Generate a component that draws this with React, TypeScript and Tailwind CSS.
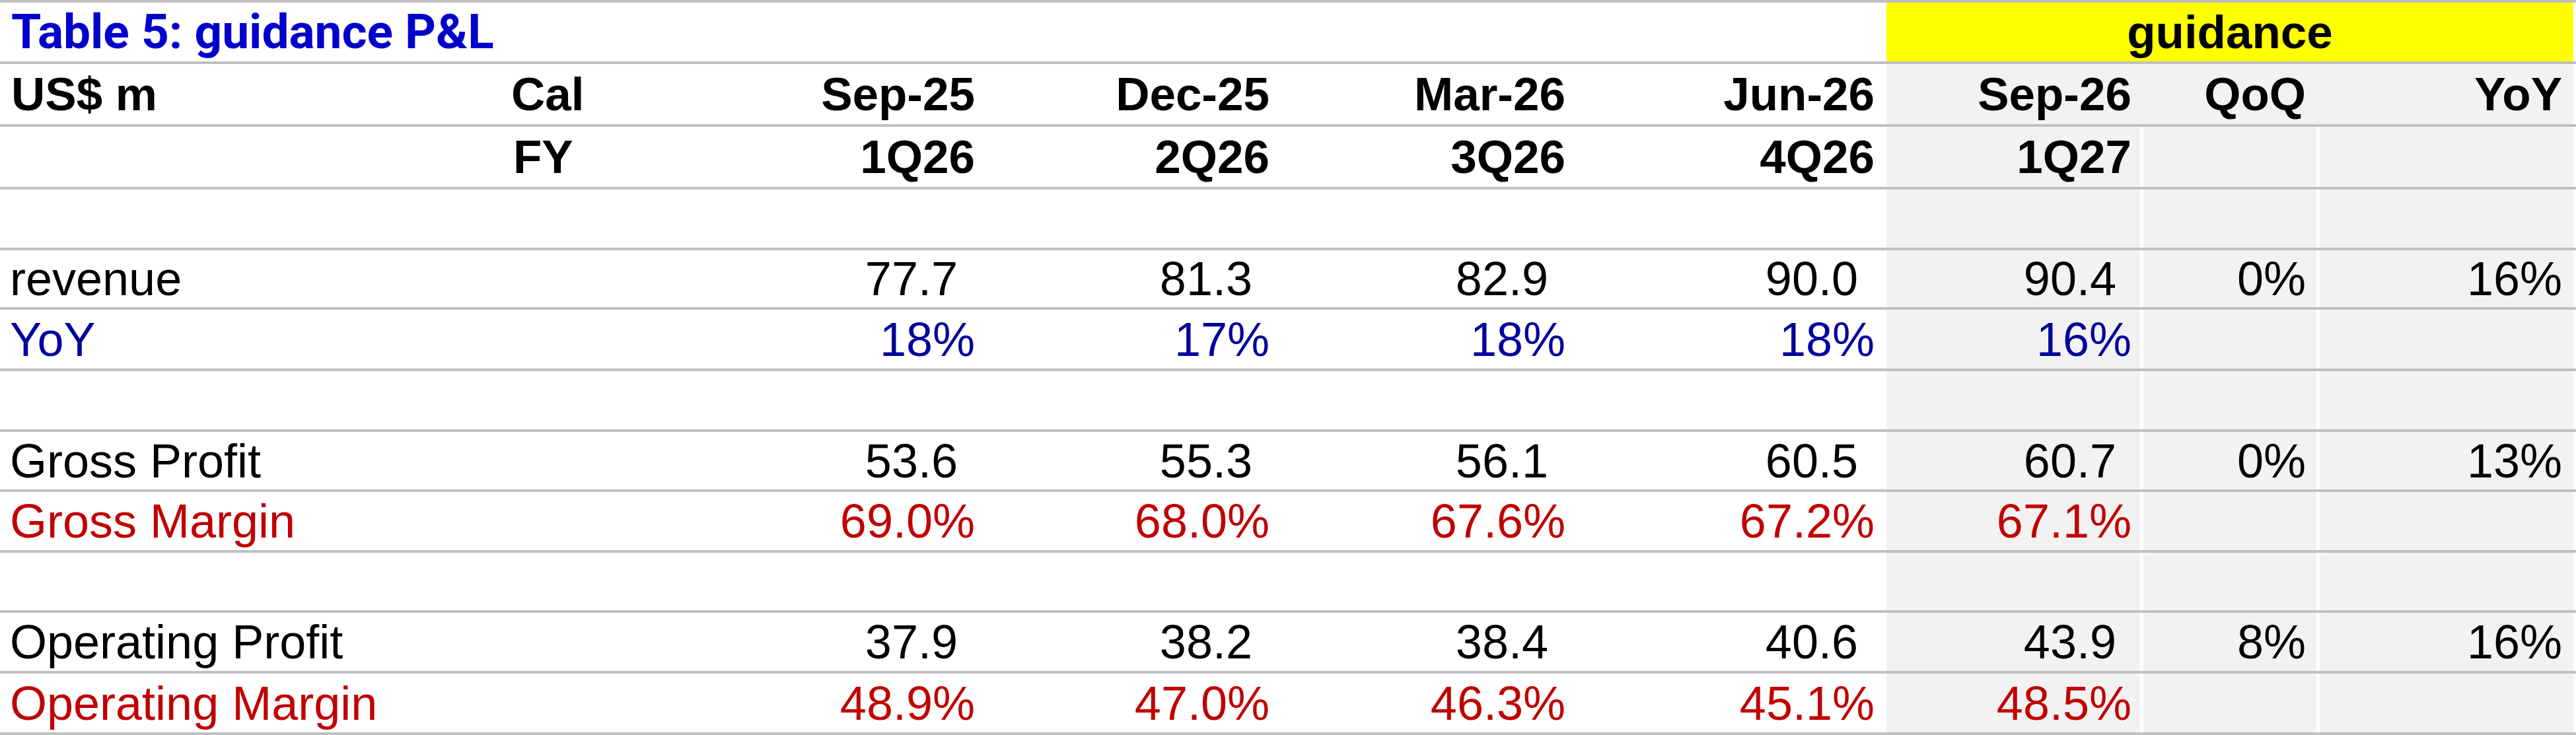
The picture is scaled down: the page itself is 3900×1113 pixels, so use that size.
import type { ReactNode } from 'react'

type Tone = 'black' | 'blue' | 'red'
type Line = {
  label: string
  tone: Tone
  kind: 'num' | 'pct'
  vals: string[]
  qoq?: string
  yoy?: string
  h: string
}

const GRID = 'grid grid-cols-[760px_240px_490px_446px_448px_472px_384px_267px_389px_4px]'
const ROW = 'border-b-4 border-[#c0c0c0]'
const ARIAL = "font-['Liberation_Sans',Arial,sans-serif]"

// right padding for % / header text in each value column (Sep-25 .. YoY)
const PCT_PAD = ['pr-[14px]', 'pr-[14px]', 'pr-[14px]', 'pr-[18px]', 'pr-[13px]', 'pr-[16px]', 'pr-[17px]']
// numbers carry a trailing space like an Excel "0.0_)" format
const NUM_PAD = ['pr-[40px]', 'pr-[40px]', 'pr-[40px]', 'pr-[43px]', 'pr-[36px]']

const TONE: Record<Tone, string> = {
  black: 'text-black',
  blue: 'text-[#00009c]',
  red: 'text-[#c00000]',
}

const LINES: (Line | { blank: true; h: string })[] = [
  { blank: true, h: 'h-[92px]' },
  { label: 'revenue', tone: 'black', kind: 'num', vals: ['77.7', '81.3', '82.9', '90.0', '90.4'], qoq: '0%', yoy: '16%', h: 'h-[90px]' },
  { label: 'YoY', tone: 'blue', kind: 'pct', vals: ['18%', '17%', '18%', '18%', '16%'], h: 'h-[93px]' },
  { blank: true, h: 'h-[92px]' },
  { label: 'Gross Profit', tone: 'black', kind: 'num', vals: ['53.6', '55.3', '56.1', '60.5', '60.7'], qoq: '0%', yoy: '13%', h: 'h-[91px]' },
  { label: 'Gross Margin', tone: 'red', kind: 'pct', vals: ['69.0%', '68.0%', '67.6%', '67.2%', '67.1%'], h: 'h-[92px]' },
  { blank: true, h: 'h-[91px]' },
  { label: 'Operating Profit', tone: 'black', kind: 'num', vals: ['37.9', '38.2', '38.4', '40.6', '43.9'], qoq: '8%', yoy: '16%', h: 'h-[92px]' },
  { label: 'Operating Margin', tone: 'red', kind: 'pct', vals: ['48.9%', '47.0%', '46.3%', '45.1%', '48.5%'], h: 'h-[93px]' },
]

function Cell({ children, className = '' }: { children?: ReactNode; className?: string }) {
  return <div className={`flex h-full items-center leading-none whitespace-nowrap ${className}`}>{children}</div>
}

// the three guidance columns: grey, with thin white gaps between them from the 1Q27 row down
function GuideCells({ sep26, qoq, yoy, split = true }: {
  sep26?: ReactNode; qoq?: ReactNode; yoy?: ReactNode; split?: boolean
}) {
  const gap = split ? 'border-l-[5px] border-white' : ''
  return (
    <>
      <Cell className={`justify-end bg-[#f2f2f2] ${PCT_PAD[4]}`}>{sep26}</Cell>
      <Cell className={`justify-end bg-[#f2f2f2] ${gap} ${PCT_PAD[5]}`}>{qoq}</Cell>
      <Cell className={`justify-end bg-[#f2f2f2] ${gap} ${PCT_PAD[6]}`}>{yoy}</Cell>
      <Cell />
    </>
  )
}

export default function App() {
  const head = `${ARIAL} font-bold text-[71px] text-black`
  const body = `${ARIAL} text-[72px]`

  return (
    <div className="w-[3900px] h-[1113px] bg-white border-t-4 border-[#c0c0c0] overflow-hidden">
      {/* title + guidance banner */}
      <div className={`${GRID} h-[93px] ${ROW}`}>
        <div className="col-span-6 flex items-center pl-[17px] font-['Roboto',sans-serif] font-bold text-[73px] leading-none text-[#0000cc]">
          Table 5: guidance P&amp;L
        </div>
        <div className={`col-span-3 flex items-center justify-center bg-[#ffff00] leading-none ${head}`}>
          guidance
        </div>
        <div />
      </div>

      {/* period header */}
      <div className={`${GRID} h-[95px] ${ROW} ${head}`}>
        <Cell className="pl-[17px]">US$ m</Cell>
        <Cell className="pl-[14px]">Cal</Cell>
        {['Sep-25', 'Dec-25', 'Mar-26', 'Jun-26'].map((p, i) => (
          <Cell key={p} className={`justify-end ${PCT_PAD[i]}`}>{p}</Cell>
        ))}
        <GuideCells sep26="Sep-26" qoq="QoQ" yoy="YoY" split={false} />
      </div>

      {/* fiscal quarter header */}
      <div className={`${GRID} h-[95px] ${ROW} ${head}`}>
        <Cell />
        <Cell className="pl-[17px]">FY</Cell>
        {['1Q26', '2Q26', '3Q26', '4Q26'].map((p, i) => (
          <Cell key={p} className={`justify-end ${PCT_PAD[i]}`}>{p}</Cell>
        ))}
        <GuideCells sep26="1Q27" />
      </div>

      {LINES.map((ln, r) => {
        if ('blank' in ln) {
          return (
            <div key={r} className={`${GRID} ${ln.h} ${ROW}`}>
              <div className="col-span-6" />
              <GuideCells />
            </div>
          )
        }
        const pad = ln.kind === 'num' ? NUM_PAD : PCT_PAD
        return (
          <div key={r} className={`${GRID} ${ln.h} ${ROW} ${body} ${TONE[ln.tone]}`}>
            <Cell className="pl-[15px]">{ln.label}</Cell>
            <Cell />
            {ln.vals.slice(0, 4).map((v, i) => (
              <Cell key={i} className={`justify-end ${pad[i]}`}>{v}</Cell>
            ))}
            <Cell className={`justify-end bg-[#f2f2f2] ${pad[4]}`}>{ln.vals[4]}</Cell>
            <Cell className={`justify-end bg-[#f2f2f2] border-l-[5px] border-white ${PCT_PAD[5]} text-black`}>{ln.qoq}</Cell>
            <Cell className={`justify-end bg-[#f2f2f2] border-l-[5px] border-white ${PCT_PAD[6]} text-black`}>{ln.yoy}</Cell>
            <Cell />
          </div>
        )
      })}
    </div>
  )
}
